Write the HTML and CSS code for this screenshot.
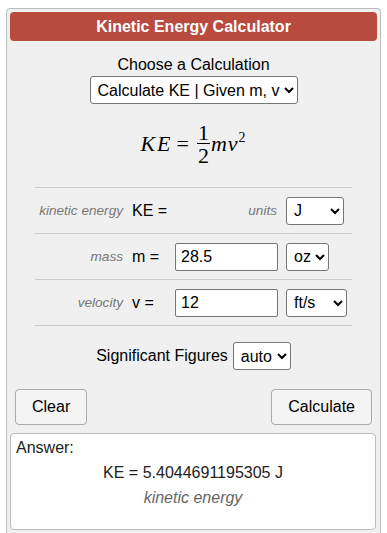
FILE: index.html
```html
<!DOCTYPE html>
<html lang="en">

<head>
    <meta charset="UTF-8">
    <meta name="viewport" content="width=device-width, initial-scale=1.0">
    <title>Kinetic Energy Calculator</title>
    <link rel="stylesheet" href="styles.css">
</head>

<body>

    <div class="calc">
        <div class="calc-title">Kinetic Energy Calculator</div>

        <div class="choose">
            <div class="choose-label">Choose a Calculation</div>
            <select class="calc-select">
                <option>Calculate KE | Given m, v</option>
                <option>Calculate m | Given KE, v</option>
                <option>Calculate v | Given KE, m</option>
            </select>
        </div>

        <!-- KE = 1/2 m v^2 -->
        <div class="formula">
            <span class="mi mi-ke">KE</span>
            <span class="mo">=</span>
            <span class="frac">
                <span class="num">1</span>
                <span class="den">2</span>
            </span>
            <span class="mi">mv<sup class="pow">2</sup></span>
        </div>

        <div class="vars">
            <div class="var-row">
                <span class="desc">kinetic energy</span>
                <span class="sym">KE =</span>
                <span class="units-label">units</span>
                <select class="unit-select unit-j">
                    <option>J</option>
                    <option>kJ</option>
                </select>
            </div>
            <div class="var-row">
                <span class="desc">mass</span>
                <span class="sym">m =</span>
                <input type="text" class="var-input" value="28.5">
                <select class="unit-select unit-oz">
                    <option>oz</option>
                    <option>kg</option>
                </select>
            </div>
            <div class="var-row">
                <span class="desc">velocity</span>
                <span class="sym">v =</span>
                <input type="text" class="var-input" value="12">
                <select class="unit-select unit-fts">
                    <option>ft/s</option>
                    <option>m/s</option>
                </select>
            </div>
        </div>

        <div class="sigfig">
            <span>Significant Figures</span>
            <select class="sig-select">
                <option>auto</option>
                <option>3</option>
            </select>
        </div>

        <div class="buttons">
            <button type="button">Clear</button>
            <button type="button">Calculate</button>
        </div>

        <div class="answer">
            <div class="answer-label">Answer:</div>
            <div class="answer-value">KE = 5.4044691195305 J</div>
            <div class="answer-desc">kinetic energy</div>
        </div>
    </div>

</body>

</html>
```

FILE: styles.css
```css
body {
    font-family: "Liberation Sans", Arial, sans-serif;
    font-size: 16px;
    margin: 0;
    padding: 0;
    background-color: #fff;
    color: #000;
}

.calc {
    margin: 8px 6px 0;
    padding: 3px 3px 30px;
    border: 1px solid #bbb;
    border-radius: 4px;
    background-color: #f0f0f0;
}

.calc-title {
    height: 29px;
    line-height: 29px;
    border-radius: 4px;
    background-color: #b94a3e;
    color: #fff;
    font-weight: bold;
    text-align: center;
}

.choose {
    margin-top: 15px;
    text-align: center;
}

.choose-label {
    line-height: 18px;
}

select,
input,
button {
    font-family: "Liberation Sans", Arial, sans-serif;
    font-size: 16px;
    color: #000;
}

select {
    height: 28px;
    padding: 0 0 0 3px;
    border: 1px solid #767676;
    border-radius: 3px;
    background-color: #fff;
}

.calc-select {
    margin-top: 2px;
    width: 208px;
}

.formula {
    height: 80px;
    padding-bottom: 3px;
    display: flex;
    justify-content: center;
    align-items: center;
    font-family: "Liberation Serif", "Times New Roman", serif;
    font-size: 22px;
}

.mi {
    font-style: italic;
    letter-spacing: 1px;
}

.mi-ke {
    letter-spacing: 2px;
}

.mo {
    margin: 0 6px 0 4px;
}

.frac {
    display: inline-flex;
    flex-direction: column;
    align-items: center;
    margin: 0 1px 0 2px;
}

.num,
.den {
    line-height: 19px;
    padding: 0 1px;
}

.num {
    border-bottom: 1px solid #000;
    padding-bottom: 1px;
}

.den {
    padding-top: 2px;
}

.pow {
    font-size: 14px;
    font-style: normal;
    vertical-align: 9px;
    line-height: 0;
}

.vars {
    margin: 0 25px;
    border-bottom: 1px solid #ccc;
}

.var-row {
    display: grid;
    grid-template-columns: 88px 52px 111px 1fr;
    align-items: center;
    height: 45px;
    border-top: 1px solid #ccc;
}

.desc {
    text-align: right;
    font-style: italic;
    font-size: 13.6px;
    color: #777;
}

.sym {
    padding-left: 9px;
}

.units-label {
    text-align: right;
    padding-right: 9px;
    font-style: italic;
    font-size: 13.6px;
    color: #777;
}

.var-input {
    width: 103px;
    height: 28px;
    box-sizing: border-box;
    padding: 0 5px;
    border: 1px solid #767676;
    border-radius: 2px;
    background-color: #fff;
}

.unit-j {
    width: 58px;
}

.unit-oz {
    width: 43px;
}

.unit-fts {
    width: 61px;
}

.sigfig {
    margin-top: 16px;
    display: flex;
    justify-content: center;
    align-items: center;
    gap: 5px;
}

.sig-select {
    width: 58px;
}

.buttons {
    margin: 19px 5px 0;
    display: flex;
    justify-content: space-between;
}

button {
    height: 36px;
    padding: 0 16px;
    border: 1px solid #aaa;
    border-radius: 4px;
    background-color: #f4f4f4;
    cursor: pointer;
}

button:hover {
    background-color: #e8e8e8;
}

.answer {
    margin-top: 8px;
    margin-right: 1px;
    padding: 1px 5px 19px;
    border: 1px solid #bbb;
    border-radius: 4px;
    background-color: #fff;
    line-height: 25px;
}

.answer-label {
    color: #222;
}

.answer-value {
    text-align: center;
    color: #222;
}

.answer-desc {
    text-align: center;
    font-style: italic;
    color: #666;
}
```
